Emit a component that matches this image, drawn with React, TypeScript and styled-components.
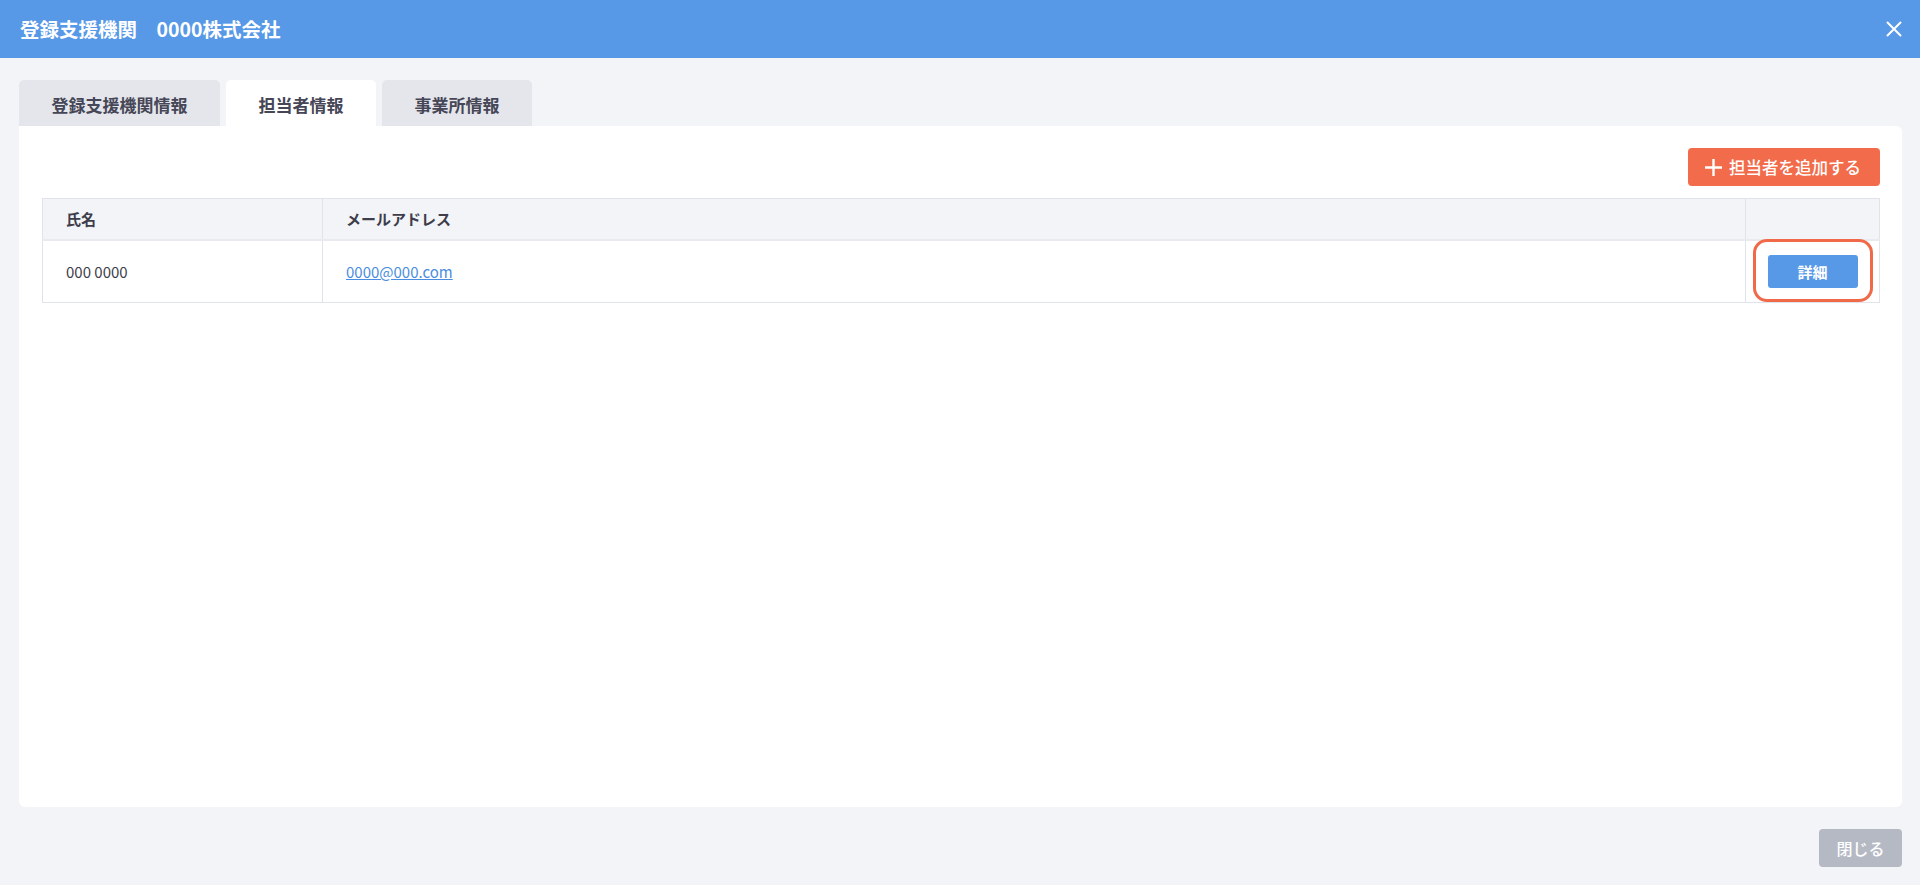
import React from "react";
import styled, { createGlobalStyle } from "styled-components";

const GlobalStyle = createGlobalStyle`
  html, body { margin: 0; padding: 0; }
  body {
    background: #f3f4f8;
    font-family: "Noto Sans CJK JP", "Noto Sans", sans-serif;
    color: #3d3d4b;
  }
  * { box-sizing: border-box; }
`;

const Page = styled.div`
  height: 885px;
  display: flex;
  flex-direction: column;
`;

const Header = styled.header`
  height: 58px;
  flex: none;
  background: #5798e7;
  display: flex;
  align-items: center;
  justify-content: space-between;
  padding: 0 18px 0 20px;
`;

const Title = styled.h1`
  margin: 0;
  color: #ffffff;
  font-size: 19.5px;
  font-weight: 700;
  line-height: 1;
`;

const CloseIcon = styled.button`
  width: 16px;
  height: 16px;
  padding: 0;
  border: none;
  background: none;
  display: flex;
  cursor: pointer;
`;

const Main = styled.main`
  flex: 1;
  display: flex;
  flex-direction: column;
  padding: 22px 18px 0 19px;
  min-height: 0;
`;

const TabList = styled.div`
  display: flex;
  gap: 6px;
  height: 46px;
  flex: none;
`;

const Tab = styled.div<{ $active?: boolean; $w: number }>`
  width: ${(p) => p.$w}px;
  display: flex;
  align-items: center;
  justify-content: center;
  padding-top: 2px;
  border-radius: 5px 5px 0 0;
  background: ${(p) => (p.$active ? "#ffffff" : "#e4e6ec")};
  color: #464656;
  font-size: 17px;
  font-weight: 700;
`;

const Panel = styled.section`
  flex: 1;
  background: #ffffff;
  border-radius: 0 6px 6px 6px;
  padding: 22px 22px 22px 23px;
  display: flex;
  flex-direction: column;
  gap: 12px;
`;

const Toolbar = styled.div`
  display: flex;
  justify-content: flex-end;
`;

const AddButton = styled.button`
  height: 38px;
  width: 192px;
  display: flex;
  align-items: center;
  gap: 6px;
  padding: 0 0 0 16px;
  border: none;
  border-radius: 4px;
  background: #f26b4a;
  color: #ffffff;
  font-family: inherit;
  font-size: 16.5px;
  font-weight: 500;
  cursor: pointer;
`;

const Table = styled.table`
  width: 100%;
  border-collapse: collapse;
  table-layout: fixed;
  border: 1px solid #e1e3ea;
  font-size: 15px;
`;

const HeadCell = styled.th<{ $w?: number }>`
  ${(p) => (p.$w ? `width: ${p.$w}px;` : "")}
  height: 41px;
  background: #f3f4f8;
  border-left: 1px solid #e1e3ea;
  border-bottom: 2px solid #e8eaef;
  text-align: left;
  padding: 0 0 0 23px;
  font-weight: 700;
  color: #3d3d4b;
`;

const Cell = styled.td<{ $center?: boolean }>`
  height: 63px;
  border-left: 1px solid #e1e3ea;
  padding: 0 0 0 ${(p) => (p.$center ? 0 : 23)}px;
  text-align: ${(p) => (p.$center ? "center" : "left")};
  color: #3d3d4b;
  vertical-align: middle;
`;

const MailLink = styled.a`
  color: #4a8de0;
  text-decoration: underline;
`;

const DetailWrap = styled.div`
  position: relative;
  display: inline-flex;
`;

const DetailButton = styled.button`
  width: 90px;
  height: 33px;
  border: none;
  border-radius: 3px;
  background: #5798e7;
  color: #ffffff;
  font-family: inherit;
  font-size: 15px;
  font-weight: 700;
  cursor: pointer;
`;

const Highlight = styled.span`
  position: absolute;
  top: -16px;
  bottom: -14px;
  left: -15px;
  right: -15px;
  border: 3px solid #f06a4a;
  border-radius: 14px;
  pointer-events: none;
`;

const Footer = styled.footer`
  flex: none;
  display: flex;
  justify-content: flex-end;
  padding: 22px 18px 18px;
`;

const CloseButton = styled.button`
  width: 83px;
  height: 38px;
  border: none;
  border-radius: 4px;
  background: #b5b9c3;
  color: #ffffff;
  font-family: inherit;
  font-size: 16px;
  font-weight: 500;
`;

export default function App() {
  return (
    <>
      <GlobalStyle />
      <Page>
        <Header>
          <Title>登録支援機関　0000株式会社</Title>
          <CloseIcon aria-label="閉じる">
            <svg width="16" height="16" viewBox="0 0 16 16">
              <path d="M1.5 1.5 L14.5 14.5 M14.5 1.5 L1.5 14.5" stroke="#ffffff" strokeWidth="2" strokeLinecap="round" />
            </svg>
          </CloseIcon>
        </Header>
        <Main>
          <TabList>
            <Tab $w={201}>登録支援機関情報</Tab>
            <Tab $w={150} $active>担当者情報</Tab>
            <Tab $w={150}>事業所情報</Tab>
          </TabList>
          <Panel>
            <Toolbar>
              <AddButton>
                <svg width="19" height="19" viewBox="0 0 19 19">
                  <path d="M9.5 1 V18 M1 9.5 H18" stroke="#ffffff" strokeWidth="2.4" />
                </svg>
                担当者を追加する
              </AddButton>
            </Toolbar>
            <Table>
              <thead>
                <tr>
                  <HeadCell $w={280}>氏名</HeadCell>
                  <HeadCell>メールアドレス</HeadCell>
                  <HeadCell $w={134}></HeadCell>
                </tr>
              </thead>
              <tbody>
                <tr>
                  <Cell>000 0000</Cell>
                  <Cell>
                    <MailLink href="#">0000@000.com</MailLink>
                  </Cell>
                  <Cell $center>
                    <DetailWrap>
                      <DetailButton>詳細</DetailButton>
                      <Highlight />
                    </DetailWrap>
                  </Cell>
                </tr>
              </tbody>
            </Table>
          </Panel>
        </Main>
        <Footer>
          <CloseButton>閉じる</CloseButton>
        </Footer>
      </Page>
    </>
  );
}
